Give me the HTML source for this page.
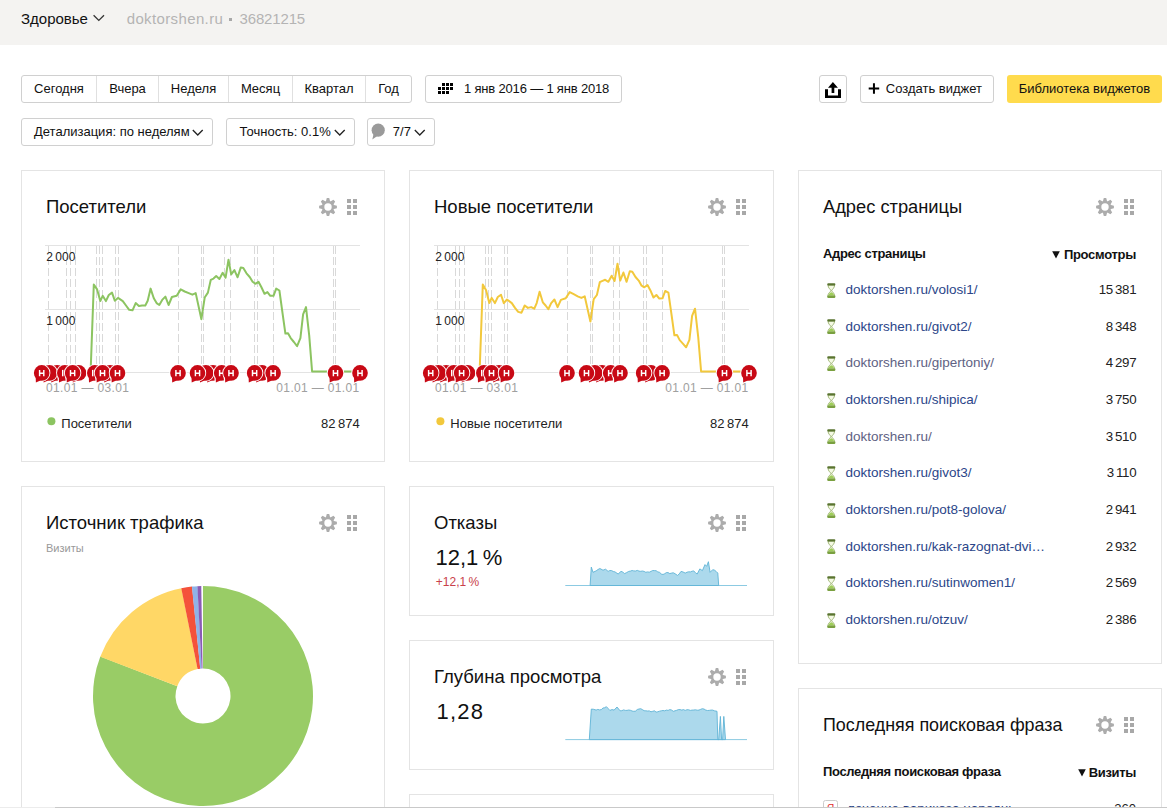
<!DOCTYPE html>
<html><head><meta charset="utf-8"><style>
html,body{margin:0;padding:0;width:1167px;height:808px;overflow:hidden;background:#fff;}
body{position:relative;font-family:"Liberation Sans", sans-serif;}
.t{position:absolute;white-space:nowrap;line-height:1;}
svg{overflow:visible;}
</style></head><body>
<div style="position:absolute;left:0px;top:0px;width:1167px;height:45px;box-sizing:border-box;background:#f4f3f1;"></div>
<div class="t" style="left:21.00px;top:11.30px;font-size:15px;color:#111;font-weight:400;">Здоровье</div>
<svg style="position:absolute;left:90px;top:10px;" width="18" height="14" viewBox="0 0 18 14"><polyline points="3.6,5.2 8.8,10.4 14,5.2" fill="none" stroke="#333" stroke-width="1.3"/></svg>
<div class="t" style="left:126.70px;top:10.80px;font-size:15px;color:#b4b4b4;font-weight:400;letter-spacing:0.37px;">doktorshen.ru</div>
<div style="position:absolute;left:229px;top:18px;width:3px;height:3px;box-sizing:border-box;background:#a8a8a8;"></div>
<div class="t" style="left:239.50px;top:10.80px;font-size:15px;color:#b4b4b4;font-weight:400;letter-spacing:-0.15px;">36821215</div>
<div style="position:absolute;left:21px;top:75px;width:391px;height:28px;box-sizing:border-box;border:1px solid #d0d0d0;border-radius:3px;background:#fff;"></div>
<div style="position:absolute;left:96px;top:76px;width:1px;height:26px;box-sizing:border-box;background:#e0e0e0;"></div>
<div style="position:absolute;left:158px;top:76px;width:1px;height:26px;box-sizing:border-box;background:#e0e0e0;"></div>
<div style="position:absolute;left:228px;top:76px;width:1px;height:26px;box-sizing:border-box;background:#e0e0e0;"></div>
<div style="position:absolute;left:292px;top:76px;width:1px;height:26px;box-sizing:border-box;background:#e0e0e0;"></div>
<div style="position:absolute;left:365px;top:76px;width:1px;height:26px;box-sizing:border-box;background:#e0e0e0;"></div>
<div class="t" style="left:59.00px;transform:translateX(-50%);top:82.00px;font-size:13px;color:#111;font-weight:400;">Сегодня</div>
<div class="t" style="left:127.50px;transform:translateX(-50%);top:82.00px;font-size:13px;color:#111;font-weight:400;">Вчера</div>
<div class="t" style="left:193.50px;transform:translateX(-50%);top:82.00px;font-size:13px;color:#111;font-weight:400;">Неделя</div>
<div class="t" style="left:260.50px;transform:translateX(-50%);top:82.00px;font-size:13px;color:#111;font-weight:400;">Месяц</div>
<div class="t" style="left:329.00px;transform:translateX(-50%);top:82.00px;font-size:13px;color:#111;font-weight:400;">Квартал</div>
<div class="t" style="left:388.50px;transform:translateX(-50%);top:82.00px;font-size:13px;color:#111;font-weight:400;">Год</div>
<div style="position:absolute;left:425px;top:75px;width:197px;height:28px;box-sizing:border-box;border:1px solid #d0d0d0;border-radius:3px;background:#fff;"></div>
<svg style="position:absolute;left:438px;top:83px;" width="17" height="13" viewBox="0 0 17 13"><rect x="4" y="0" width="3" height="3" fill="#000"/><rect x="8" y="0" width="3" height="3" fill="#000"/><rect x="12" y="0" width="3" height="3" fill="#000"/><rect x="0" y="4" width="3" height="3" fill="#000"/><rect x="4" y="4" width="3" height="3" fill="#000"/><rect x="8" y="4" width="3" height="3" fill="#000"/><rect x="12" y="4" width="3" height="3" fill="#000"/><rect x="0" y="8" width="3" height="3" fill="#000"/><rect x="4" y="8" width="3" height="3" fill="#000"/><rect x="8" y="8" width="3" height="3" fill="#000"/></svg>
<div class="t" style="left:464.00px;top:82.00px;font-size:13px;color:#111;font-weight:400;letter-spacing:-0.18px;">1 янв 2016 — 1 янв 2018</div>
<div style="position:absolute;left:819px;top:75px;width:28px;height:28px;box-sizing:border-box;border:1px solid #d0d0d0;border-radius:3px;background:#fff;"></div>
<svg style="position:absolute;left:819px;top:75px;" width="28" height="28" viewBox="0 0 28 28"><path d="M6,14.3 h3 v6.3 h10 v-6.3 h3 v8.6 h-16 z" fill="#000"/><path d="M13.9,7 L18.9,12.8 L15.3,12.8 L15.3,18 L12.6,18 L12.6,12.8 L9,12.8 z" fill="#000"/></svg>
<div style="position:absolute;left:860px;top:75px;width:134px;height:28px;box-sizing:border-box;border:1px solid #d0d0d0;border-radius:3px;background:#fff;"></div>
<svg style="position:absolute;left:868px;top:82px;" width="12" height="13" viewBox="0 0 12 13"><rect x="0.7" y="5.5" width="10.5" height="2" fill="#000"/><rect x="4.95" y="1.25" width="2" height="10.5" fill="#000"/></svg>
<div class="t" style="left:885.80px;top:82.00px;font-size:13px;color:#111;font-weight:400;">Создать виджет</div>
<div style="position:absolute;left:1007px;top:75px;width:155px;height:28px;box-sizing:border-box;background:#ffdb4d;border-radius:3px;"></div>
<div class="t" style="left:1084.50px;transform:translateX(-50%);top:82.00px;font-size:13px;color:#111;font-weight:400;">Библиотека виджетов</div>
<div style="position:absolute;left:21px;top:118px;width:192px;height:28px;box-sizing:border-box;border:1px solid #d0d0d0;border-radius:3px;background:#fff;"></div>
<div class="t" style="left:34.00px;top:125.30px;font-size:13px;color:#111;font-weight:400;">Детализация: по неделям</div>
<svg style="position:absolute;left:191.5px;top:128.8px;" width="12" height="8" viewBox="0 0 12 8"><polyline points="0.8,1 5.75,6 10.7,1" fill="none" stroke="#222" stroke-width="1.3"/></svg>
<div style="position:absolute;left:226px;top:118px;width:129px;height:28px;box-sizing:border-box;border:1px solid #d0d0d0;border-radius:3px;background:#fff;"></div>
<div class="t" style="left:239.60px;top:125.30px;font-size:13px;color:#111;font-weight:400;">Точность: 0.1%</div>
<svg style="position:absolute;left:333.5px;top:128.8px;" width="12" height="8" viewBox="0 0 12 8"><polyline points="0.8,1 5.75,6 10.7,1" fill="none" stroke="#222" stroke-width="1.3"/></svg>
<div style="position:absolute;left:367px;top:118px;width:68px;height:28px;box-sizing:border-box;border:1px solid #d0d0d0;border-radius:3px;background:#fff;"></div>
<svg style="position:absolute;left:370px;top:122px;" width="16" height="19" viewBox="0 0 16 19"><circle cx="8.2" cy="8.2" r="6.6" fill="#9a9a9a"/><path d="M3.5,12 L2.3,17.6 L8,13.5 z" fill="#9a9a9a"/></svg>
<div class="t" style="left:392.80px;top:125.30px;font-size:13px;color:#111;font-weight:400;">7/7</div>
<svg style="position:absolute;left:413.5px;top:128.8px;" width="12" height="8" viewBox="0 0 12 8"><polyline points="0.8,1 5.75,6 10.7,1" fill="none" stroke="#222" stroke-width="1.3"/></svg>
<div style="position:absolute;left:21px;top:170px;width:364px;height:292px;box-sizing:border-box;border:1px solid #e4e4e4;background:#fff;"></div>
<div class="t" style="left:46.00px;top:197.64px;font-size:18.5px;color:#111;font-weight:400;">Посетители</div>
<svg style="position:absolute;left:301px;top:190px;" width="60" height="36" viewBox="0 0 60 36"><g transform="translate(27,17)"><path d="M-2.3,-5 L-1.2,-8.9 L1.2,-8.9 L2.3,-5 z" transform="rotate(0)" fill="#acacac"/><path d="M-2.3,-5 L-1.2,-8.9 L1.2,-8.9 L2.3,-5 z" transform="rotate(45)" fill="#acacac"/><path d="M-2.3,-5 L-1.2,-8.9 L1.2,-8.9 L2.3,-5 z" transform="rotate(90)" fill="#acacac"/><path d="M-2.3,-5 L-1.2,-8.9 L1.2,-8.9 L2.3,-5 z" transform="rotate(135)" fill="#acacac"/><path d="M-2.3,-5 L-1.2,-8.9 L1.2,-8.9 L2.3,-5 z" transform="rotate(180)" fill="#acacac"/><path d="M-2.3,-5 L-1.2,-8.9 L1.2,-8.9 L2.3,-5 z" transform="rotate(225)" fill="#acacac"/><path d="M-2.3,-5 L-1.2,-8.9 L1.2,-8.9 L2.3,-5 z" transform="rotate(270)" fill="#acacac"/><path d="M-2.3,-5 L-1.2,-8.9 L1.2,-8.9 L2.3,-5 z" transform="rotate(315)" fill="#acacac"/><circle cx="0" cy="0" r="6.1" fill="#acacac"/><circle cx="0" cy="0" r="3.7" fill="#fff"/></g><rect x="46" y="9" width="4" height="4" fill="#a8a8a8"/><rect x="46" y="15" width="4" height="4" fill="#a8a8a8"/><rect x="46" y="21" width="4" height="4" fill="#a8a8a8"/><rect x="52" y="9" width="4" height="4" fill="#a8a8a8"/><rect x="52" y="15" width="4" height="4" fill="#a8a8a8"/><rect x="52" y="21" width="4" height="4" fill="#a8a8a8"/></svg>
<div style="position:absolute;left:409px;top:170px;width:365px;height:292px;box-sizing:border-box;border:1px solid #e4e4e4;background:#fff;"></div>
<div class="t" style="left:434.00px;top:197.64px;font-size:18.5px;color:#111;font-weight:400;">Новые посетители</div>
<svg style="position:absolute;left:690px;top:190px;" width="60" height="36" viewBox="0 0 60 36"><g transform="translate(27,17)"><path d="M-2.3,-5 L-1.2,-8.9 L1.2,-8.9 L2.3,-5 z" transform="rotate(0)" fill="#acacac"/><path d="M-2.3,-5 L-1.2,-8.9 L1.2,-8.9 L2.3,-5 z" transform="rotate(45)" fill="#acacac"/><path d="M-2.3,-5 L-1.2,-8.9 L1.2,-8.9 L2.3,-5 z" transform="rotate(90)" fill="#acacac"/><path d="M-2.3,-5 L-1.2,-8.9 L1.2,-8.9 L2.3,-5 z" transform="rotate(135)" fill="#acacac"/><path d="M-2.3,-5 L-1.2,-8.9 L1.2,-8.9 L2.3,-5 z" transform="rotate(180)" fill="#acacac"/><path d="M-2.3,-5 L-1.2,-8.9 L1.2,-8.9 L2.3,-5 z" transform="rotate(225)" fill="#acacac"/><path d="M-2.3,-5 L-1.2,-8.9 L1.2,-8.9 L2.3,-5 z" transform="rotate(270)" fill="#acacac"/><path d="M-2.3,-5 L-1.2,-8.9 L1.2,-8.9 L2.3,-5 z" transform="rotate(315)" fill="#acacac"/><circle cx="0" cy="0" r="6.1" fill="#acacac"/><circle cx="0" cy="0" r="3.7" fill="#fff"/></g><rect x="46" y="9" width="4" height="4" fill="#a8a8a8"/><rect x="46" y="15" width="4" height="4" fill="#a8a8a8"/><rect x="46" y="21" width="4" height="4" fill="#a8a8a8"/><rect x="52" y="9" width="4" height="4" fill="#a8a8a8"/><rect x="52" y="15" width="4" height="4" fill="#a8a8a8"/><rect x="52" y="21" width="4" height="4" fill="#a8a8a8"/></svg>
<div style="position:absolute;left:798px;top:170px;width:364px;height:494px;box-sizing:border-box;border:1px solid #e4e4e4;background:#fff;"></div>
<div class="t" style="left:823.00px;top:197.81px;font-size:18.3px;color:#111;font-weight:400;">Адрес страницы</div>
<svg style="position:absolute;left:1078px;top:190px;" width="60" height="36" viewBox="0 0 60 36"><g transform="translate(27,17)"><path d="M-2.3,-5 L-1.2,-8.9 L1.2,-8.9 L2.3,-5 z" transform="rotate(0)" fill="#acacac"/><path d="M-2.3,-5 L-1.2,-8.9 L1.2,-8.9 L2.3,-5 z" transform="rotate(45)" fill="#acacac"/><path d="M-2.3,-5 L-1.2,-8.9 L1.2,-8.9 L2.3,-5 z" transform="rotate(90)" fill="#acacac"/><path d="M-2.3,-5 L-1.2,-8.9 L1.2,-8.9 L2.3,-5 z" transform="rotate(135)" fill="#acacac"/><path d="M-2.3,-5 L-1.2,-8.9 L1.2,-8.9 L2.3,-5 z" transform="rotate(180)" fill="#acacac"/><path d="M-2.3,-5 L-1.2,-8.9 L1.2,-8.9 L2.3,-5 z" transform="rotate(225)" fill="#acacac"/><path d="M-2.3,-5 L-1.2,-8.9 L1.2,-8.9 L2.3,-5 z" transform="rotate(270)" fill="#acacac"/><path d="M-2.3,-5 L-1.2,-8.9 L1.2,-8.9 L2.3,-5 z" transform="rotate(315)" fill="#acacac"/><circle cx="0" cy="0" r="6.1" fill="#acacac"/><circle cx="0" cy="0" r="3.7" fill="#fff"/></g><rect x="46" y="9" width="4" height="4" fill="#a8a8a8"/><rect x="46" y="15" width="4" height="4" fill="#a8a8a8"/><rect x="46" y="21" width="4" height="4" fill="#a8a8a8"/><rect x="52" y="9" width="4" height="4" fill="#a8a8a8"/><rect x="52" y="15" width="4" height="4" fill="#a8a8a8"/><rect x="52" y="21" width="4" height="4" fill="#a8a8a8"/></svg>
<div style="position:absolute;left:21px;top:486px;width:364px;height:340px;box-sizing:border-box;border:1px solid #e4e4e4;background:#fff;"></div>
<div class="t" style="left:46.00px;top:513.64px;font-size:18.5px;color:#111;font-weight:400;">Источник трафика</div>
<svg style="position:absolute;left:301px;top:506px;" width="60" height="36" viewBox="0 0 60 36"><g transform="translate(27,17)"><path d="M-2.3,-5 L-1.2,-8.9 L1.2,-8.9 L2.3,-5 z" transform="rotate(0)" fill="#acacac"/><path d="M-2.3,-5 L-1.2,-8.9 L1.2,-8.9 L2.3,-5 z" transform="rotate(45)" fill="#acacac"/><path d="M-2.3,-5 L-1.2,-8.9 L1.2,-8.9 L2.3,-5 z" transform="rotate(90)" fill="#acacac"/><path d="M-2.3,-5 L-1.2,-8.9 L1.2,-8.9 L2.3,-5 z" transform="rotate(135)" fill="#acacac"/><path d="M-2.3,-5 L-1.2,-8.9 L1.2,-8.9 L2.3,-5 z" transform="rotate(180)" fill="#acacac"/><path d="M-2.3,-5 L-1.2,-8.9 L1.2,-8.9 L2.3,-5 z" transform="rotate(225)" fill="#acacac"/><path d="M-2.3,-5 L-1.2,-8.9 L1.2,-8.9 L2.3,-5 z" transform="rotate(270)" fill="#acacac"/><path d="M-2.3,-5 L-1.2,-8.9 L1.2,-8.9 L2.3,-5 z" transform="rotate(315)" fill="#acacac"/><circle cx="0" cy="0" r="6.1" fill="#acacac"/><circle cx="0" cy="0" r="3.7" fill="#fff"/></g><rect x="46" y="9" width="4" height="4" fill="#a8a8a8"/><rect x="46" y="15" width="4" height="4" fill="#a8a8a8"/><rect x="46" y="21" width="4" height="4" fill="#a8a8a8"/><rect x="52" y="9" width="4" height="4" fill="#a8a8a8"/><rect x="52" y="15" width="4" height="4" fill="#a8a8a8"/><rect x="52" y="21" width="4" height="4" fill="#a8a8a8"/></svg>
<div style="position:absolute;left:409px;top:486px;width:365px;height:130px;box-sizing:border-box;border:1px solid #e4e4e4;background:#fff;"></div>
<div class="t" style="left:434.00px;top:513.64px;font-size:18.5px;color:#111;font-weight:400;">Отказы</div>
<svg style="position:absolute;left:690px;top:506px;" width="60" height="36" viewBox="0 0 60 36"><g transform="translate(27,17)"><path d="M-2.3,-5 L-1.2,-8.9 L1.2,-8.9 L2.3,-5 z" transform="rotate(0)" fill="#acacac"/><path d="M-2.3,-5 L-1.2,-8.9 L1.2,-8.9 L2.3,-5 z" transform="rotate(45)" fill="#acacac"/><path d="M-2.3,-5 L-1.2,-8.9 L1.2,-8.9 L2.3,-5 z" transform="rotate(90)" fill="#acacac"/><path d="M-2.3,-5 L-1.2,-8.9 L1.2,-8.9 L2.3,-5 z" transform="rotate(135)" fill="#acacac"/><path d="M-2.3,-5 L-1.2,-8.9 L1.2,-8.9 L2.3,-5 z" transform="rotate(180)" fill="#acacac"/><path d="M-2.3,-5 L-1.2,-8.9 L1.2,-8.9 L2.3,-5 z" transform="rotate(225)" fill="#acacac"/><path d="M-2.3,-5 L-1.2,-8.9 L1.2,-8.9 L2.3,-5 z" transform="rotate(270)" fill="#acacac"/><path d="M-2.3,-5 L-1.2,-8.9 L1.2,-8.9 L2.3,-5 z" transform="rotate(315)" fill="#acacac"/><circle cx="0" cy="0" r="6.1" fill="#acacac"/><circle cx="0" cy="0" r="3.7" fill="#fff"/></g><rect x="46" y="9" width="4" height="4" fill="#a8a8a8"/><rect x="46" y="15" width="4" height="4" fill="#a8a8a8"/><rect x="46" y="21" width="4" height="4" fill="#a8a8a8"/><rect x="52" y="9" width="4" height="4" fill="#a8a8a8"/><rect x="52" y="15" width="4" height="4" fill="#a8a8a8"/><rect x="52" y="21" width="4" height="4" fill="#a8a8a8"/></svg>
<div style="position:absolute;left:409px;top:640px;width:365px;height:130px;box-sizing:border-box;border:1px solid #e4e4e4;background:#fff;"></div>
<div class="t" style="left:434.00px;top:667.64px;font-size:18.5px;color:#111;font-weight:400;">Глубина просмотра</div>
<svg style="position:absolute;left:690px;top:660px;" width="60" height="36" viewBox="0 0 60 36"><g transform="translate(27,17)"><path d="M-2.3,-5 L-1.2,-8.9 L1.2,-8.9 L2.3,-5 z" transform="rotate(0)" fill="#acacac"/><path d="M-2.3,-5 L-1.2,-8.9 L1.2,-8.9 L2.3,-5 z" transform="rotate(45)" fill="#acacac"/><path d="M-2.3,-5 L-1.2,-8.9 L1.2,-8.9 L2.3,-5 z" transform="rotate(90)" fill="#acacac"/><path d="M-2.3,-5 L-1.2,-8.9 L1.2,-8.9 L2.3,-5 z" transform="rotate(135)" fill="#acacac"/><path d="M-2.3,-5 L-1.2,-8.9 L1.2,-8.9 L2.3,-5 z" transform="rotate(180)" fill="#acacac"/><path d="M-2.3,-5 L-1.2,-8.9 L1.2,-8.9 L2.3,-5 z" transform="rotate(225)" fill="#acacac"/><path d="M-2.3,-5 L-1.2,-8.9 L1.2,-8.9 L2.3,-5 z" transform="rotate(270)" fill="#acacac"/><path d="M-2.3,-5 L-1.2,-8.9 L1.2,-8.9 L2.3,-5 z" transform="rotate(315)" fill="#acacac"/><circle cx="0" cy="0" r="6.1" fill="#acacac"/><circle cx="0" cy="0" r="3.7" fill="#fff"/></g><rect x="46" y="9" width="4" height="4" fill="#a8a8a8"/><rect x="46" y="15" width="4" height="4" fill="#a8a8a8"/><rect x="46" y="21" width="4" height="4" fill="#a8a8a8"/><rect x="52" y="9" width="4" height="4" fill="#a8a8a8"/><rect x="52" y="15" width="4" height="4" fill="#a8a8a8"/><rect x="52" y="21" width="4" height="4" fill="#a8a8a8"/></svg>
<div style="position:absolute;left:409px;top:794px;width:365px;height:40px;box-sizing:border-box;border:1px solid #e4e4e4;background:#fff;"></div>
<svg style="position:absolute;left:689px;top:814px;" width="60" height="36" viewBox="0 0 60 36"><g transform="translate(27,17)"><path d="M-2.3,-5 L-1.2,-8.9 L1.2,-8.9 L2.3,-5 z" transform="rotate(0)" fill="#acacac"/><path d="M-2.3,-5 L-1.2,-8.9 L1.2,-8.9 L2.3,-5 z" transform="rotate(45)" fill="#acacac"/><path d="M-2.3,-5 L-1.2,-8.9 L1.2,-8.9 L2.3,-5 z" transform="rotate(90)" fill="#acacac"/><path d="M-2.3,-5 L-1.2,-8.9 L1.2,-8.9 L2.3,-5 z" transform="rotate(135)" fill="#acacac"/><path d="M-2.3,-5 L-1.2,-8.9 L1.2,-8.9 L2.3,-5 z" transform="rotate(180)" fill="#acacac"/><path d="M-2.3,-5 L-1.2,-8.9 L1.2,-8.9 L2.3,-5 z" transform="rotate(225)" fill="#acacac"/><path d="M-2.3,-5 L-1.2,-8.9 L1.2,-8.9 L2.3,-5 z" transform="rotate(270)" fill="#acacac"/><path d="M-2.3,-5 L-1.2,-8.9 L1.2,-8.9 L2.3,-5 z" transform="rotate(315)" fill="#acacac"/><circle cx="0" cy="0" r="6.1" fill="#acacac"/><circle cx="0" cy="0" r="3.7" fill="#fff"/></g><rect x="46" y="9" width="4" height="4" fill="#a8a8a8"/><rect x="46" y="15" width="4" height="4" fill="#a8a8a8"/><rect x="46" y="21" width="4" height="4" fill="#a8a8a8"/><rect x="52" y="9" width="4" height="4" fill="#a8a8a8"/><rect x="52" y="15" width="4" height="4" fill="#a8a8a8"/><rect x="52" y="21" width="4" height="4" fill="#a8a8a8"/></svg>
<div style="position:absolute;left:798px;top:688px;width:364px;height:200px;box-sizing:border-box;border:1px solid #e4e4e4;background:#fff;"></div>
<div class="t" style="left:823.00px;top:716.85px;font-size:17.9px;color:#111;font-weight:400;">Последняя поисковая фраза</div>
<svg style="position:absolute;left:1078px;top:708px;" width="60" height="36" viewBox="0 0 60 36"><g transform="translate(27,17)"><path d="M-2.3,-5 L-1.2,-8.9 L1.2,-8.9 L2.3,-5 z" transform="rotate(0)" fill="#acacac"/><path d="M-2.3,-5 L-1.2,-8.9 L1.2,-8.9 L2.3,-5 z" transform="rotate(45)" fill="#acacac"/><path d="M-2.3,-5 L-1.2,-8.9 L1.2,-8.9 L2.3,-5 z" transform="rotate(90)" fill="#acacac"/><path d="M-2.3,-5 L-1.2,-8.9 L1.2,-8.9 L2.3,-5 z" transform="rotate(135)" fill="#acacac"/><path d="M-2.3,-5 L-1.2,-8.9 L1.2,-8.9 L2.3,-5 z" transform="rotate(180)" fill="#acacac"/><path d="M-2.3,-5 L-1.2,-8.9 L1.2,-8.9 L2.3,-5 z" transform="rotate(225)" fill="#acacac"/><path d="M-2.3,-5 L-1.2,-8.9 L1.2,-8.9 L2.3,-5 z" transform="rotate(270)" fill="#acacac"/><path d="M-2.3,-5 L-1.2,-8.9 L1.2,-8.9 L2.3,-5 z" transform="rotate(315)" fill="#acacac"/><circle cx="0" cy="0" r="6.1" fill="#acacac"/><circle cx="0" cy="0" r="3.7" fill="#fff"/></g><rect x="46" y="9" width="4" height="4" fill="#a8a8a8"/><rect x="46" y="15" width="4" height="4" fill="#a8a8a8"/><rect x="46" y="21" width="4" height="4" fill="#a8a8a8"/><rect x="52" y="9" width="4" height="4" fill="#a8a8a8"/><rect x="52" y="15" width="4" height="4" fill="#a8a8a8"/><rect x="52" y="21" width="4" height="4" fill="#a8a8a8"/></svg>
<svg style="position:absolute;left:30px;top:236px;" width="340" height="164" viewBox="0 0 340 164"><line x1="15" y1="9.5" x2="330" y2="9.5" stroke="#e3e3e3" stroke-width="1"/><line x1="15" y1="73.5" x2="330" y2="73.5" stroke="#e3e3e3" stroke-width="1"/><line x1="15" y1="136.5" x2="330" y2="136.5" stroke="#e3e3e3" stroke-width="1"/><line x1="18.5" y1="10" x2="18.5" y2="136" stroke="#d9d9d9" stroke-width="1" stroke-dasharray="8,3"/><line x1="36.5" y1="10" x2="36.5" y2="136" stroke="#d9d9d9" stroke-width="1" stroke-dasharray="8,3"/><line x1="40.5" y1="10" x2="40.5" y2="136" stroke="#d9d9d9" stroke-width="1" stroke-dasharray="8,3"/><line x1="45.5" y1="10" x2="45.5" y2="136" stroke="#d9d9d9" stroke-width="1" stroke-dasharray="8,3"/><line x1="66.5" y1="10" x2="66.5" y2="136" stroke="#d9d9d9" stroke-width="1" stroke-dasharray="8,3"/><line x1="69.5" y1="10" x2="69.5" y2="136" stroke="#d9d9d9" stroke-width="1" stroke-dasharray="8,3"/><line x1="72.5" y1="10" x2="72.5" y2="136" stroke="#d9d9d9" stroke-width="1" stroke-dasharray="8,3"/><line x1="85.5" y1="10" x2="85.5" y2="136" stroke="#d9d9d9" stroke-width="1" stroke-dasharray="8,3"/><line x1="88.5" y1="10" x2="88.5" y2="136" stroke="#d9d9d9" stroke-width="1" stroke-dasharray="8,3"/><line x1="148.5" y1="10" x2="148.5" y2="136" stroke="#d9d9d9" stroke-width="1" stroke-dasharray="8,3"/><line x1="171.5" y1="10" x2="171.5" y2="136" stroke="#d9d9d9" stroke-width="1" stroke-dasharray="8,3"/><line x1="173.5" y1="10" x2="173.5" y2="136" stroke="#d9d9d9" stroke-width="1" stroke-dasharray="8,3"/><line x1="194.5" y1="10" x2="194.5" y2="136" stroke="#d9d9d9" stroke-width="1" stroke-dasharray="8,3"/><line x1="200.5" y1="10" x2="200.5" y2="136" stroke="#d9d9d9" stroke-width="1" stroke-dasharray="8,3"/><line x1="224.5" y1="10" x2="224.5" y2="136" stroke="#d9d9d9" stroke-width="1" stroke-dasharray="8,3"/><line x1="227.5" y1="10" x2="227.5" y2="136" stroke="#d9d9d9" stroke-width="1" stroke-dasharray="8,3"/><line x1="243.5" y1="10" x2="243.5" y2="136" stroke="#d9d9d9" stroke-width="1" stroke-dasharray="8,3"/><line x1="303.5" y1="10" x2="303.5" y2="136" stroke="#d9d9d9" stroke-width="1" stroke-dasharray="8,3"/><line x1="305.5" y1="10" x2="305.5" y2="136" stroke="#d9d9d9" stroke-width="1" stroke-dasharray="8,3"/><polyline points="15.0,136.0 60.6,136.2 63.8,48.6 67.1,53.4 70.3,65.1 72.7,59.8 75.9,65.1 78.8,59.0 82.0,56.6 84.8,64.7 88.0,61.9 92.8,65.1 96.0,69.5 99.2,73.8 102.5,74.3 105.7,67.1 108.9,70.0 112.1,69.5 115.3,69.5 117.7,64.7 120.6,52.6 123.8,62.3 126.6,67.1 129.3,69.0 132.2,63.9 135.4,60.6 138.6,69.0 141.9,61.0 146.7,59.8 150.7,53.4 154.7,55.5 158.7,57.1 162.4,58.7 165.7,57.1 171.4,83.2 174.7,61.5 177.9,56.6 180.8,43.8 183.5,42.6 186.2,40.1 189.4,43.0 192.7,36.8 195.6,41.7 198.5,23.7 201.2,38.4 204.4,34.1 207.6,41.3 210.8,31.4 213.3,32.0 216.5,37.3 219.7,41.0 222.6,45.8 225.3,47.8 228.5,45.8 231.3,51.0 234.5,57.8 237.4,56.1 240.3,59.8 243.5,59.8 246.2,52.6 249.4,54.5 252.7,78.3 255.4,97.6 258.0,97.3 260.7,102.1 263.9,106.0 267.1,110.2 270.4,102.1 273.1,78.3 276.0,71.1 279.2,99.3 282.1,135.5 330.0,135.5" fill="none" stroke="#8cc461" stroke-width="2" stroke-linejoin="round"/><g transform="translate(27.1,136.9)"><circle r="8.7" fill="#fff"/><path d="M-6.8,3.8 L-5.9,10.2 L0.8,6.8 z" fill="#fff" stroke="#fff" stroke-width="1.4"/><circle r="7.8" fill="#c80915"/><path d="M-6,3.8 L-5.8,9.6 L0.4,6.9 z" fill="#c80915"/></g><g transform="translate(19.4,136.9)"><circle r="8.7" fill="#fff"/><path d="M-6.8,3.8 L-5.9,10.2 L0.8,6.8 z" fill="#fff" stroke="#fff" stroke-width="1.4"/><circle r="7.8" fill="#c80915"/><path d="M-6,3.8 L-5.8,9.6 L0.4,6.9 z" fill="#c80915"/></g><g transform="translate(11.7,136.9)"><circle r="8.7" fill="#fff"/><path d="M-6.8,3.8 L-5.9,10.2 L0.8,6.8 z" fill="#fff" stroke="#fff" stroke-width="1.4"/><circle r="7.8" fill="#c80915"/><path d="M-6,3.8 L-5.8,9.6 L0.4,6.9 z" fill="#c80915"/><path d="M-2.1,-3 v6.4 M2.1,-3 v6.4 M-2.1,0.3 h4.2" stroke="#fff" stroke-width="1.45" fill="none"/></g><g transform="translate(48.6,136.9)"><circle r="8.7" fill="#fff"/><path d="M-6.8,3.8 L-5.9,10.2 L0.8,6.8 z" fill="#fff" stroke="#fff" stroke-width="1.4"/><circle r="7.8" fill="#c80915"/><path d="M-6,3.8 L-5.8,9.6 L0.4,6.9 z" fill="#c80915"/></g><g transform="translate(34.8,136.9)"><circle r="8.7" fill="#fff"/><path d="M-6.8,3.8 L-5.9,10.2 L0.8,6.8 z" fill="#fff" stroke="#fff" stroke-width="1.4"/><circle r="7.8" fill="#c80915"/><path d="M-6,3.8 L-5.8,9.6 L0.4,6.9 z" fill="#c80915"/><path d="M-2.1,-3 v6.4" stroke="#fff" stroke-width="1.45" fill="none"/></g><g transform="translate(42.6,136.9)"><circle r="8.7" fill="#fff"/><path d="M-6.8,3.8 L-5.9,10.2 L0.8,6.8 z" fill="#fff" stroke="#fff" stroke-width="1.4"/><circle r="7.8" fill="#c80915"/><path d="M-6,3.8 L-5.8,9.6 L0.4,6.9 z" fill="#c80915"/><path d="M-2.1,-3 v6.4 M2.1,-3 v6.4 M-2.1,0.3 h4.2" stroke="#fff" stroke-width="1.45" fill="none"/></g><g transform="translate(80.0,136.9)"><circle r="8.7" fill="#fff"/><path d="M-6.8,3.8 L-5.9,10.2 L0.8,6.8 z" fill="#fff" stroke="#fff" stroke-width="1.4"/><circle r="7.8" fill="#c80915"/><path d="M-6,3.8 L-5.8,9.6 L0.4,6.9 z" fill="#c80915"/></g><g transform="translate(64.8,136.9)"><circle r="8.7" fill="#fff"/><path d="M-6.8,3.8 L-5.9,10.2 L0.8,6.8 z" fill="#fff" stroke="#fff" stroke-width="1.4"/><circle r="7.8" fill="#c80915"/><path d="M-6,3.8 L-5.8,9.6 L0.4,6.9 z" fill="#c80915"/><path d="M-2.1,-3 v6.4" stroke="#fff" stroke-width="1.45" fill="none"/></g><g transform="translate(72.5,136.9)"><circle r="8.7" fill="#fff"/><path d="M-6.8,3.8 L-5.9,10.2 L0.8,6.8 z" fill="#fff" stroke="#fff" stroke-width="1.4"/><circle r="7.8" fill="#c80915"/><path d="M-6,3.8 L-5.8,9.6 L0.4,6.9 z" fill="#c80915"/><path d="M-2.1,-3 v6.4 M2.1,-3 v6.4 M-2.1,0.3 h4.2" stroke="#fff" stroke-width="1.45" fill="none"/></g><g transform="translate(87.5,136.9)"><circle r="8.7" fill="#fff"/><path d="M-6.8,3.8 L-5.9,10.2 L0.8,6.8 z" fill="#fff" stroke="#fff" stroke-width="1.4"/><circle r="7.8" fill="#c80915"/><path d="M-6,3.8 L-5.8,9.6 L0.4,6.9 z" fill="#c80915"/><path d="M-2.1,-3 v6.4 M2.1,-3 v6.4 M-2.1,0.3 h4.2" stroke="#fff" stroke-width="1.45" fill="none"/></g><g transform="translate(148.0,136.9)"><circle r="8.7" fill="#fff"/><path d="M-6.8,3.8 L-5.9,10.2 L0.8,6.8 z" fill="#fff" stroke="#fff" stroke-width="1.4"/><circle r="7.8" fill="#c80915"/><path d="M-6,3.8 L-5.8,9.6 L0.4,6.9 z" fill="#c80915"/><path d="M-2.1,-3 v6.4 M2.1,-3 v6.4 M-2.1,0.3 h4.2" stroke="#fff" stroke-width="1.45" fill="none"/></g><g transform="translate(183.0,136.9)"><circle r="8.7" fill="#fff"/><path d="M-6.8,3.8 L-5.9,10.2 L0.8,6.8 z" fill="#fff" stroke="#fff" stroke-width="1.4"/><circle r="7.8" fill="#c80915"/><path d="M-6,3.8 L-5.8,9.6 L0.4,6.9 z" fill="#c80915"/></g><g transform="translate(175.8,136.9)"><circle r="8.7" fill="#fff"/><path d="M-6.8,3.8 L-5.9,10.2 L0.8,6.8 z" fill="#fff" stroke="#fff" stroke-width="1.4"/><circle r="7.8" fill="#c80915"/><path d="M-6,3.8 L-5.8,9.6 L0.4,6.9 z" fill="#c80915"/></g><g transform="translate(167.5,136.9)"><circle r="8.7" fill="#fff"/><path d="M-6.8,3.8 L-5.9,10.2 L0.8,6.8 z" fill="#fff" stroke="#fff" stroke-width="1.4"/><circle r="7.8" fill="#c80915"/><path d="M-6,3.8 L-5.8,9.6 L0.4,6.9 z" fill="#c80915"/><path d="M-2.1,-3 v6.4 M2.1,-3 v6.4 M-2.1,0.3 h4.2" stroke="#fff" stroke-width="1.45" fill="none"/></g><g transform="translate(191.7,136.9)"><circle r="8.7" fill="#fff"/><path d="M-6.8,3.8 L-5.9,10.2 L0.8,6.8 z" fill="#fff" stroke="#fff" stroke-width="1.4"/><circle r="7.8" fill="#c80915"/><path d="M-6,3.8 L-5.8,9.6 L0.4,6.9 z" fill="#c80915"/><path d="M-2.1,-3 v6.4 M2.1,-3 v6.4 M-2.1,0.3 h4.2" stroke="#fff" stroke-width="1.45" fill="none"/></g><g transform="translate(201.0,136.9)"><circle r="8.7" fill="#fff"/><path d="M-6.8,3.8 L-5.9,10.2 L0.8,6.8 z" fill="#fff" stroke="#fff" stroke-width="1.4"/><circle r="7.8" fill="#c80915"/><path d="M-6,3.8 L-5.8,9.6 L0.4,6.9 z" fill="#c80915"/><path d="M-2.1,-3 v6.4 M2.1,-3 v6.4 M-2.1,0.3 h4.2" stroke="#fff" stroke-width="1.45" fill="none"/></g><g transform="translate(232.0,136.9)"><circle r="8.7" fill="#fff"/><path d="M-6.8,3.8 L-5.9,10.2 L0.8,6.8 z" fill="#fff" stroke="#fff" stroke-width="1.4"/><circle r="7.8" fill="#c80915"/><path d="M-6,3.8 L-5.8,9.6 L0.4,6.9 z" fill="#c80915"/></g><g transform="translate(224.6,136.9)"><circle r="8.7" fill="#fff"/><path d="M-6.8,3.8 L-5.9,10.2 L0.8,6.8 z" fill="#fff" stroke="#fff" stroke-width="1.4"/><circle r="7.8" fill="#c80915"/><path d="M-6,3.8 L-5.8,9.6 L0.4,6.9 z" fill="#c80915"/><path d="M-2.1,-3 v6.4 M2.1,-3 v6.4 M-2.1,0.3 h4.2" stroke="#fff" stroke-width="1.45" fill="none"/></g><g transform="translate(243.1,136.9)"><circle r="8.7" fill="#fff"/><path d="M-6.8,3.8 L-5.9,10.2 L0.8,6.8 z" fill="#fff" stroke="#fff" stroke-width="1.4"/><circle r="7.8" fill="#c80915"/><path d="M-6,3.8 L-5.8,9.6 L0.4,6.9 z" fill="#c80915"/><path d="M-2.1,-3 v6.4 M2.1,-3 v6.4 M-2.1,0.3 h4.2" stroke="#fff" stroke-width="1.45" fill="none"/></g><g transform="translate(305.5,136.9)"><circle r="8.7" fill="#fff"/><path d="M-6.8,3.8 L-5.9,10.2 L0.8,6.8 z" fill="#fff" stroke="#fff" stroke-width="1.4"/><circle r="7.8" fill="#c80915"/><path d="M-6,3.8 L-5.8,9.6 L0.4,6.9 z" fill="#c80915"/><path d="M-2.1,-3 v6.4 M2.1,-3 v6.4 M-2.1,0.3 h4.2" stroke="#fff" stroke-width="1.45" fill="none"/></g><g transform="translate(330.0,136.9)"><circle r="8.7" fill="#fff"/><path d="M-6.8,3.8 L-5.9,10.2 L0.8,6.8 z" fill="#fff" stroke="#fff" stroke-width="1.4"/><circle r="7.8" fill="#c80915"/><path d="M-6,3.8 L-5.8,9.6 L0.4,6.9 z" fill="#c80915"/><path d="M-2.1,-3 v6.4 M2.1,-3 v6.4 M-2.1,0.3 h4.2" stroke="#fff" stroke-width="1.45" fill="none"/></g></svg>
<div class="t" style="left:46.30px;top:250.84px;font-size:12px;color:#222;font-weight:400;">2&thinsp;000</div>
<div class="t" style="left:46.30px;top:314.84px;font-size:12px;color:#222;font-weight:400;">1&thinsp;000</div>
<div class="t" style="left:46.00px;top:381.84px;font-size:12px;color:#a0a0a0;font-weight:400;letter-spacing:0.35px;">01.01 — 03.01</div>
<div class="t" style="right:807.40px;top:381.84px;font-size:12px;color:#a0a0a0;font-weight:400;letter-spacing:0.35px;">01.01 — 01.01</div>
<svg style="position:absolute;left:46.7px;top:416.8px;" width="9" height="9" viewBox="0 0 9 9"><circle cx="4.4" cy="4.2" r="4" fill="#8cc461"/></svg>
<div class="t" style="left:61.30px;top:417.30px;font-size:13px;color:#222;font-weight:400;">Посетители</div>
<div class="t" style="right:807.20px;top:417.30px;font-size:13px;color:#222;font-weight:400;">82&thinsp;874</div>
<svg style="position:absolute;left:419px;top:236px;" width="340" height="164" viewBox="0 0 340 164"><line x1="15" y1="9.5" x2="330" y2="9.5" stroke="#e3e3e3" stroke-width="1"/><line x1="15" y1="73.5" x2="330" y2="73.5" stroke="#e3e3e3" stroke-width="1"/><line x1="15" y1="136.5" x2="330" y2="136.5" stroke="#e3e3e3" stroke-width="1"/><line x1="18.5" y1="10" x2="18.5" y2="136" stroke="#d9d9d9" stroke-width="1" stroke-dasharray="8,3"/><line x1="36.5" y1="10" x2="36.5" y2="136" stroke="#d9d9d9" stroke-width="1" stroke-dasharray="8,3"/><line x1="40.5" y1="10" x2="40.5" y2="136" stroke="#d9d9d9" stroke-width="1" stroke-dasharray="8,3"/><line x1="45.5" y1="10" x2="45.5" y2="136" stroke="#d9d9d9" stroke-width="1" stroke-dasharray="8,3"/><line x1="66.5" y1="10" x2="66.5" y2="136" stroke="#d9d9d9" stroke-width="1" stroke-dasharray="8,3"/><line x1="69.5" y1="10" x2="69.5" y2="136" stroke="#d9d9d9" stroke-width="1" stroke-dasharray="8,3"/><line x1="72.5" y1="10" x2="72.5" y2="136" stroke="#d9d9d9" stroke-width="1" stroke-dasharray="8,3"/><line x1="85.5" y1="10" x2="85.5" y2="136" stroke="#d9d9d9" stroke-width="1" stroke-dasharray="8,3"/><line x1="88.5" y1="10" x2="88.5" y2="136" stroke="#d9d9d9" stroke-width="1" stroke-dasharray="8,3"/><line x1="148.5" y1="10" x2="148.5" y2="136" stroke="#d9d9d9" stroke-width="1" stroke-dasharray="8,3"/><line x1="171.5" y1="10" x2="171.5" y2="136" stroke="#d9d9d9" stroke-width="1" stroke-dasharray="8,3"/><line x1="173.5" y1="10" x2="173.5" y2="136" stroke="#d9d9d9" stroke-width="1" stroke-dasharray="8,3"/><line x1="194.5" y1="10" x2="194.5" y2="136" stroke="#d9d9d9" stroke-width="1" stroke-dasharray="8,3"/><line x1="200.5" y1="10" x2="200.5" y2="136" stroke="#d9d9d9" stroke-width="1" stroke-dasharray="8,3"/><line x1="224.5" y1="10" x2="224.5" y2="136" stroke="#d9d9d9" stroke-width="1" stroke-dasharray="8,3"/><line x1="227.5" y1="10" x2="227.5" y2="136" stroke="#d9d9d9" stroke-width="1" stroke-dasharray="8,3"/><line x1="243.5" y1="10" x2="243.5" y2="136" stroke="#d9d9d9" stroke-width="1" stroke-dasharray="8,3"/><line x1="303.5" y1="10" x2="303.5" y2="136" stroke="#d9d9d9" stroke-width="1" stroke-dasharray="8,3"/><line x1="305.5" y1="10" x2="305.5" y2="136" stroke="#d9d9d9" stroke-width="1" stroke-dasharray="8,3"/><polyline points="15.0,136.0 60.6,136.2 63.8,48.6 67.1,54.2 70.3,67.1 72.7,61.9 75.9,67.1 78.8,61.0 82.0,58.7 84.8,67.1 88.0,63.5 92.8,67.1 96.0,71.9 99.2,75.9 102.5,76.7 105.7,69.5 108.9,71.9 112.1,71.1 115.3,72.7 117.7,67.1 120.6,55.8 123.8,66.3 126.6,69.5 129.3,73.2 132.2,67.1 135.4,63.5 138.6,71.1 141.9,63.9 146.7,62.3 150.7,56.1 154.7,58.2 158.7,60.3 162.4,61.9 165.7,60.3 171.4,85.6 174.7,63.1 177.9,59.0 180.8,46.2 183.5,44.9 186.2,43.8 189.4,45.8 192.7,39.7 195.6,44.9 198.5,27.7 201.2,44.6 204.4,36.5 207.6,45.8 210.8,35.2 213.3,35.7 216.5,41.0 219.7,44.6 222.6,49.7 225.3,51.3 228.5,49.1 231.3,54.2 234.5,61.5 237.4,59.0 240.3,62.6 243.5,62.3 246.2,55.0 249.4,56.6 252.7,79.9 255.4,99.3 258.0,98.9 260.7,104.1 263.9,107.6 267.1,111.3 270.4,103.8 273.1,79.9 276.0,72.7 279.2,100.9 282.1,135.4 330.0,135.5" fill="none" stroke="#f2c83c" stroke-width="2" stroke-linejoin="round"/><g transform="translate(27.1,136.9)"><circle r="8.7" fill="#fff"/><path d="M-6.8,3.8 L-5.9,10.2 L0.8,6.8 z" fill="#fff" stroke="#fff" stroke-width="1.4"/><circle r="7.8" fill="#c80915"/><path d="M-6,3.8 L-5.8,9.6 L0.4,6.9 z" fill="#c80915"/></g><g transform="translate(19.4,136.9)"><circle r="8.7" fill="#fff"/><path d="M-6.8,3.8 L-5.9,10.2 L0.8,6.8 z" fill="#fff" stroke="#fff" stroke-width="1.4"/><circle r="7.8" fill="#c80915"/><path d="M-6,3.8 L-5.8,9.6 L0.4,6.9 z" fill="#c80915"/></g><g transform="translate(11.7,136.9)"><circle r="8.7" fill="#fff"/><path d="M-6.8,3.8 L-5.9,10.2 L0.8,6.8 z" fill="#fff" stroke="#fff" stroke-width="1.4"/><circle r="7.8" fill="#c80915"/><path d="M-6,3.8 L-5.8,9.6 L0.4,6.9 z" fill="#c80915"/><path d="M-2.1,-3 v6.4 M2.1,-3 v6.4 M-2.1,0.3 h4.2" stroke="#fff" stroke-width="1.45" fill="none"/></g><g transform="translate(48.6,136.9)"><circle r="8.7" fill="#fff"/><path d="M-6.8,3.8 L-5.9,10.2 L0.8,6.8 z" fill="#fff" stroke="#fff" stroke-width="1.4"/><circle r="7.8" fill="#c80915"/><path d="M-6,3.8 L-5.8,9.6 L0.4,6.9 z" fill="#c80915"/></g><g transform="translate(34.8,136.9)"><circle r="8.7" fill="#fff"/><path d="M-6.8,3.8 L-5.9,10.2 L0.8,6.8 z" fill="#fff" stroke="#fff" stroke-width="1.4"/><circle r="7.8" fill="#c80915"/><path d="M-6,3.8 L-5.8,9.6 L0.4,6.9 z" fill="#c80915"/><path d="M-2.1,-3 v6.4" stroke="#fff" stroke-width="1.45" fill="none"/></g><g transform="translate(42.6,136.9)"><circle r="8.7" fill="#fff"/><path d="M-6.8,3.8 L-5.9,10.2 L0.8,6.8 z" fill="#fff" stroke="#fff" stroke-width="1.4"/><circle r="7.8" fill="#c80915"/><path d="M-6,3.8 L-5.8,9.6 L0.4,6.9 z" fill="#c80915"/><path d="M-2.1,-3 v6.4 M2.1,-3 v6.4 M-2.1,0.3 h4.2" stroke="#fff" stroke-width="1.45" fill="none"/></g><g transform="translate(80.0,136.9)"><circle r="8.7" fill="#fff"/><path d="M-6.8,3.8 L-5.9,10.2 L0.8,6.8 z" fill="#fff" stroke="#fff" stroke-width="1.4"/><circle r="7.8" fill="#c80915"/><path d="M-6,3.8 L-5.8,9.6 L0.4,6.9 z" fill="#c80915"/></g><g transform="translate(64.8,136.9)"><circle r="8.7" fill="#fff"/><path d="M-6.8,3.8 L-5.9,10.2 L0.8,6.8 z" fill="#fff" stroke="#fff" stroke-width="1.4"/><circle r="7.8" fill="#c80915"/><path d="M-6,3.8 L-5.8,9.6 L0.4,6.9 z" fill="#c80915"/><path d="M-2.1,-3 v6.4" stroke="#fff" stroke-width="1.45" fill="none"/></g><g transform="translate(72.5,136.9)"><circle r="8.7" fill="#fff"/><path d="M-6.8,3.8 L-5.9,10.2 L0.8,6.8 z" fill="#fff" stroke="#fff" stroke-width="1.4"/><circle r="7.8" fill="#c80915"/><path d="M-6,3.8 L-5.8,9.6 L0.4,6.9 z" fill="#c80915"/><path d="M-2.1,-3 v6.4 M2.1,-3 v6.4 M-2.1,0.3 h4.2" stroke="#fff" stroke-width="1.45" fill="none"/></g><g transform="translate(87.5,136.9)"><circle r="8.7" fill="#fff"/><path d="M-6.8,3.8 L-5.9,10.2 L0.8,6.8 z" fill="#fff" stroke="#fff" stroke-width="1.4"/><circle r="7.8" fill="#c80915"/><path d="M-6,3.8 L-5.8,9.6 L0.4,6.9 z" fill="#c80915"/><path d="M-2.1,-3 v6.4 M2.1,-3 v6.4 M-2.1,0.3 h4.2" stroke="#fff" stroke-width="1.45" fill="none"/></g><g transform="translate(148.0,136.9)"><circle r="8.7" fill="#fff"/><path d="M-6.8,3.8 L-5.9,10.2 L0.8,6.8 z" fill="#fff" stroke="#fff" stroke-width="1.4"/><circle r="7.8" fill="#c80915"/><path d="M-6,3.8 L-5.8,9.6 L0.4,6.9 z" fill="#c80915"/><path d="M-2.1,-3 v6.4 M2.1,-3 v6.4 M-2.1,0.3 h4.2" stroke="#fff" stroke-width="1.45" fill="none"/></g><g transform="translate(183.0,136.9)"><circle r="8.7" fill="#fff"/><path d="M-6.8,3.8 L-5.9,10.2 L0.8,6.8 z" fill="#fff" stroke="#fff" stroke-width="1.4"/><circle r="7.8" fill="#c80915"/><path d="M-6,3.8 L-5.8,9.6 L0.4,6.9 z" fill="#c80915"/></g><g transform="translate(175.8,136.9)"><circle r="8.7" fill="#fff"/><path d="M-6.8,3.8 L-5.9,10.2 L0.8,6.8 z" fill="#fff" stroke="#fff" stroke-width="1.4"/><circle r="7.8" fill="#c80915"/><path d="M-6,3.8 L-5.8,9.6 L0.4,6.9 z" fill="#c80915"/></g><g transform="translate(167.5,136.9)"><circle r="8.7" fill="#fff"/><path d="M-6.8,3.8 L-5.9,10.2 L0.8,6.8 z" fill="#fff" stroke="#fff" stroke-width="1.4"/><circle r="7.8" fill="#c80915"/><path d="M-6,3.8 L-5.8,9.6 L0.4,6.9 z" fill="#c80915"/><path d="M-2.1,-3 v6.4 M2.1,-3 v6.4 M-2.1,0.3 h4.2" stroke="#fff" stroke-width="1.45" fill="none"/></g><g transform="translate(191.7,136.9)"><circle r="8.7" fill="#fff"/><path d="M-6.8,3.8 L-5.9,10.2 L0.8,6.8 z" fill="#fff" stroke="#fff" stroke-width="1.4"/><circle r="7.8" fill="#c80915"/><path d="M-6,3.8 L-5.8,9.6 L0.4,6.9 z" fill="#c80915"/><path d="M-2.1,-3 v6.4 M2.1,-3 v6.4 M-2.1,0.3 h4.2" stroke="#fff" stroke-width="1.45" fill="none"/></g><g transform="translate(201.0,136.9)"><circle r="8.7" fill="#fff"/><path d="M-6.8,3.8 L-5.9,10.2 L0.8,6.8 z" fill="#fff" stroke="#fff" stroke-width="1.4"/><circle r="7.8" fill="#c80915"/><path d="M-6,3.8 L-5.8,9.6 L0.4,6.9 z" fill="#c80915"/><path d="M-2.1,-3 v6.4 M2.1,-3 v6.4 M-2.1,0.3 h4.2" stroke="#fff" stroke-width="1.45" fill="none"/></g><g transform="translate(232.0,136.9)"><circle r="8.7" fill="#fff"/><path d="M-6.8,3.8 L-5.9,10.2 L0.8,6.8 z" fill="#fff" stroke="#fff" stroke-width="1.4"/><circle r="7.8" fill="#c80915"/><path d="M-6,3.8 L-5.8,9.6 L0.4,6.9 z" fill="#c80915"/></g><g transform="translate(224.6,136.9)"><circle r="8.7" fill="#fff"/><path d="M-6.8,3.8 L-5.9,10.2 L0.8,6.8 z" fill="#fff" stroke="#fff" stroke-width="1.4"/><circle r="7.8" fill="#c80915"/><path d="M-6,3.8 L-5.8,9.6 L0.4,6.9 z" fill="#c80915"/><path d="M-2.1,-3 v6.4 M2.1,-3 v6.4 M-2.1,0.3 h4.2" stroke="#fff" stroke-width="1.45" fill="none"/></g><g transform="translate(243.1,136.9)"><circle r="8.7" fill="#fff"/><path d="M-6.8,3.8 L-5.9,10.2 L0.8,6.8 z" fill="#fff" stroke="#fff" stroke-width="1.4"/><circle r="7.8" fill="#c80915"/><path d="M-6,3.8 L-5.8,9.6 L0.4,6.9 z" fill="#c80915"/><path d="M-2.1,-3 v6.4 M2.1,-3 v6.4 M-2.1,0.3 h4.2" stroke="#fff" stroke-width="1.45" fill="none"/></g><g transform="translate(305.5,136.9)"><circle r="8.7" fill="#fff"/><path d="M-6.8,3.8 L-5.9,10.2 L0.8,6.8 z" fill="#fff" stroke="#fff" stroke-width="1.4"/><circle r="7.8" fill="#c80915"/><path d="M-6,3.8 L-5.8,9.6 L0.4,6.9 z" fill="#c80915"/><path d="M-2.1,-3 v6.4 M2.1,-3 v6.4 M-2.1,0.3 h4.2" stroke="#fff" stroke-width="1.45" fill="none"/></g><g transform="translate(330.0,136.9)"><circle r="8.7" fill="#fff"/><path d="M-6.8,3.8 L-5.9,10.2 L0.8,6.8 z" fill="#fff" stroke="#fff" stroke-width="1.4"/><circle r="7.8" fill="#c80915"/><path d="M-6,3.8 L-5.8,9.6 L0.4,6.9 z" fill="#c80915"/><path d="M-2.1,-3 v6.4 M2.1,-3 v6.4 M-2.1,0.3 h4.2" stroke="#fff" stroke-width="1.45" fill="none"/></g></svg>
<div class="t" style="left:435.30px;top:250.84px;font-size:12px;color:#222;font-weight:400;">2&thinsp;000</div>
<div class="t" style="left:435.30px;top:314.84px;font-size:12px;color:#222;font-weight:400;">1&thinsp;000</div>
<div class="t" style="left:435.00px;top:381.84px;font-size:12px;color:#a0a0a0;font-weight:400;letter-spacing:0.35px;">01.01 — 03.01</div>
<div class="t" style="right:418.40px;top:381.84px;font-size:12px;color:#a0a0a0;font-weight:400;letter-spacing:0.35px;">01.01 — 01.01</div>
<svg style="position:absolute;left:435.7px;top:416.8px;" width="9" height="9" viewBox="0 0 9 9"><circle cx="4.4" cy="4.2" r="4" fill="#f2c83c"/></svg>
<div class="t" style="left:450.30px;top:417.30px;font-size:13px;color:#222;font-weight:400;">Новые посетители</div>
<div class="t" style="right:418.20px;top:417.30px;font-size:13px;color:#222;font-weight:400;">82&thinsp;874</div>
<svg style="position:absolute;left:83.1px;top:576px;" width="240" height="240" viewBox="0 0 240 240"><circle cx="120" cy="120" r="110" fill="#fff"/><path d="M120.00,10.00 A110,110 0 1 1 17.31,80.58 L94.33,110.14 A27.5,27.5 0 1 0 120.00,92.50 Z" fill="#99cc66"/><path d="M17.24,80.76 A110,110 0 0 1 98.45,12.13 L114.61,93.03 A27.5,27.5 0 0 0 94.31,110.19 Z" fill="#ffd766"/><path d="M98.26,12.17 A110,110 0 0 1 109.07,10.54 L117.27,92.64 A27.5,27.5 0 0 0 114.56,93.04 Z" fill="#f4523b"/><path d="M108.88,10.56 A110,110 0 0 1 114.63,10.13 L118.66,92.53 A27.5,27.5 0 0 0 117.22,92.64 Z" fill="#8fb3e8"/><path d="M114.43,10.14 A110,110 0 0 1 118.27,10.01 L119.57,92.50 A27.5,27.5 0 0 0 118.61,92.54 Z" fill="#8a5cb5"/></svg>
<div class="t" style="left:46.00px;top:542.69px;font-size:11px;color:#999;font-weight:400;">Визиты</div>
<svg style="position:absolute;left:0px;top:0px;pointer-events:none" width="1167" height="808" viewBox="0 0 1167 808"><line x1="565.3" y1="585.5" x2="747" y2="585.5" stroke="#8ccae2" stroke-width="1"/><polygon points="590.1,585.5 591.3,567.1 593.0,572.3 596.1,570.9 598.0,569.5 599.9,568.5 603.0,570.2 605.6,569.2 608.1,571.4 609.8,570.5 611.6,570.6 613.3,571.5 615.0,571.9 618.1,574.0 621.0,571.4 622.7,571.9 624.4,573.7 626.6,572.6 628.7,571.4 630.4,571.1 632.1,570.5 633.8,570.9 635.5,571.0 637.3,570.4 639.0,571.1 640.7,571.3 642.4,571.0 644.1,571.4 645.8,572.3 647.5,571.9 649.3,572.2 651.0,571.4 652.7,570.5 654.4,570.6 656.1,570.7 657.8,571.9 659.5,572.3 661.3,574.0 663.0,574.5 664.7,573.7 666.4,572.6 668.1,572.6 669.8,573.6 671.5,573.1 673.3,572.8 675.0,573.7 677.5,575.4 679.3,573.9 681.0,571.4 683.1,572.0 685.2,573.1 687.0,572.2 688.7,571.8 690.4,571.9 692.1,571.2 693.8,570.9 695.5,572.9 697.2,574.0 699.8,568.9 702.4,570.6 705.0,564.6 706.7,566.3 708.4,561.7 710.1,572.3 712.7,569.7 714.4,570.1 716.1,571.4 717.8,573.1 718.7,585.5" fill="#acd9ec" stroke="#5fb3d6" stroke-width="0.9" stroke-linejoin="round"/><line x1="565.3" y1="739.6" x2="747" y2="739.6" stroke="#8ccae2" stroke-width="1"/><polygon points="589.3,739.6 591.3,709.1 593.7,709.3 596.1,710.1 597.8,709.4 599.6,709.9 601.3,709.6 603.0,708.0 604.7,707.7 606.4,706.7 608.1,708.4 609.8,710.4 612.0,709.6 614.1,710.1 617.0,707.0 620.1,710.8 621.8,710.7 623.6,709.9 625.3,710.4 627.0,710.4 628.7,710.0 630.4,710.3 632.1,711.0 633.8,711.3 635.5,711.1 637.3,709.5 639.0,709.0 640.7,708.7 642.4,709.6 644.1,710.7 645.8,710.8 647.5,711.0 649.3,710.9 651.0,711.8 652.7,711.3 654.4,710.8 656.1,712.1 657.8,711.8 659.5,711.2 661.3,710.8 663.0,710.5 664.7,710.8 666.4,710.1 668.1,710.4 669.8,709.6 671.5,710.0 673.3,711.3 675.0,710.8 676.7,710.3 678.4,709.6 680.1,709.6 681.8,710.1 683.5,709.6 685.2,710.4 687.0,709.7 688.7,709.8 690.4,710.4 692.1,710.1 693.8,710.0 695.5,709.8 697.2,710.2 699.0,710.1 700.7,709.3 702.4,708.7 704.1,709.1 705.8,710.1 707.5,710.5 709.2,710.4 711.0,710.1 712.7,710.1 714.4,710.8 717.0,711.3 717.8,739.6 718.7,739.6 720.4,716.4 721.6,739.6 722.6,739.6 723.8,716.4 725.5,739.6" fill="#acd9ec" stroke="#5fb3d6" stroke-width="0.9" stroke-linejoin="round"/></svg>
<div class="t" style="left:435.50px;top:546.98px;font-size:22px;color:#111;font-weight:400;">12,1&thinsp;%</div>
<div class="t" style="left:435.80px;top:576.44px;font-size:12px;color:#c9414a;font-weight:400;">+12,1&thinsp;%</div>
<div class="t" style="left:436.50px;top:700.68px;font-size:22px;color:#111;font-weight:400;letter-spacing:1.2px;">1,28</div>
<div class="t" style="left:823.00px;top:247.20px;font-size:13px;color:#111;font-weight:700;letter-spacing:-0.33px;">Адрес страницы</div>
<div class="t" style="right:31.00px;top:247.60px;font-size:13px;color:#111;font-weight:700;letter-spacing:-0.3px;">Просмотры</div>
<svg style="position:absolute;left:1052px;top:251px;" width="8" height="8" viewBox="0 0 8 8"><path d="M0.2,0.2 L7.8,0.2 L4,7.6 z" fill="#111"/></svg>
<svg style="position:absolute;left:826.6px;top:282.8px;" width="9" height="16" viewBox="0 0 9 16"><path d="M1,2 h6.6 C7.6,5.2 4.9,6.4 4.7,7.6 C4.9,8.8 7.8,10.2 7.8,13.2 h-7 C0.8,10.2 3.7,8.8 3.9,7.6 C3.7,6.4 1,5.2 1,2 z" fill="#f4f9e4" stroke="#8ba65a" stroke-width="0.8"/><rect x="0.2" y="0.3" width="8.2" height="2.3" rx="1.1" fill="#5a7430"/><path d="M1.3,12.6 C1.8,10.6 3.6,9.6 4.3,9.3 C5,9.6 6.8,10.6 7.3,12.6 z" fill="#9fcd5a"/><rect x="0.2" y="12.4" width="8.2" height="2.6" rx="1.2" fill="#7aa040"/></svg>
<div class="t" style="left:845.50px;top:282.87px;font-size:13.5px;color:#2b4689;font-weight:400;">doktorshen.ru/volosi1/</div>
<div class="t" style="right:30.80px;top:283.04px;font-size:13.3px;color:#222;font-weight:400;letter-spacing:-0.35px;">15&thinsp;381</div>
<svg style="position:absolute;left:826.6px;top:319.47px;" width="9" height="16" viewBox="0 0 9 16"><path d="M1,2 h6.6 C7.6,5.2 4.9,6.4 4.7,7.6 C4.9,8.8 7.8,10.2 7.8,13.2 h-7 C0.8,10.2 3.7,8.8 3.9,7.6 C3.7,6.4 1,5.2 1,2 z" fill="#f4f9e4" stroke="#8ba65a" stroke-width="0.8"/><rect x="0.2" y="0.3" width="8.2" height="2.3" rx="1.1" fill="#5a7430"/><path d="M1.3,12.6 C1.8,10.6 3.6,9.6 4.3,9.3 C5,9.6 6.8,10.6 7.3,12.6 z" fill="#9fcd5a"/><rect x="0.2" y="12.4" width="8.2" height="2.6" rx="1.2" fill="#7aa040"/></svg>
<div class="t" style="left:845.50px;top:319.54px;font-size:13.5px;color:#2b4689;font-weight:400;">doktorshen.ru/givot2/</div>
<div class="t" style="right:30.80px;top:319.71px;font-size:13.3px;color:#222;font-weight:400;letter-spacing:-0.35px;">8&thinsp;348</div>
<svg style="position:absolute;left:826.6px;top:356.14000000000004px;" width="9" height="16" viewBox="0 0 9 16"><path d="M1,2 h6.6 C7.6,5.2 4.9,6.4 4.7,7.6 C4.9,8.8 7.8,10.2 7.8,13.2 h-7 C0.8,10.2 3.7,8.8 3.9,7.6 C3.7,6.4 1,5.2 1,2 z" fill="#f4f9e4" stroke="#8ba65a" stroke-width="0.8"/><rect x="0.2" y="0.3" width="8.2" height="2.3" rx="1.1" fill="#5a7430"/><path d="M1.3,12.6 C1.8,10.6 3.6,9.6 4.3,9.3 C5,9.6 6.8,10.6 7.3,12.6 z" fill="#9fcd5a"/><rect x="0.2" y="12.4" width="8.2" height="2.6" rx="1.2" fill="#7aa040"/></svg>
<div class="t" style="left:845.50px;top:356.21px;font-size:13.5px;color:#606283;font-weight:400;">doktorshen.ru/gipertoniy/</div>
<div class="t" style="right:30.80px;top:356.38px;font-size:13.3px;color:#222;font-weight:400;letter-spacing:-0.35px;">4&thinsp;297</div>
<svg style="position:absolute;left:826.6px;top:392.81px;" width="9" height="16" viewBox="0 0 9 16"><path d="M1,2 h6.6 C7.6,5.2 4.9,6.4 4.7,7.6 C4.9,8.8 7.8,10.2 7.8,13.2 h-7 C0.8,10.2 3.7,8.8 3.9,7.6 C3.7,6.4 1,5.2 1,2 z" fill="#f4f9e4" stroke="#8ba65a" stroke-width="0.8"/><rect x="0.2" y="0.3" width="8.2" height="2.3" rx="1.1" fill="#5a7430"/><path d="M1.3,12.6 C1.8,10.6 3.6,9.6 4.3,9.3 C5,9.6 6.8,10.6 7.3,12.6 z" fill="#9fcd5a"/><rect x="0.2" y="12.4" width="8.2" height="2.6" rx="1.2" fill="#7aa040"/></svg>
<div class="t" style="left:845.50px;top:392.88px;font-size:13.5px;color:#2b4689;font-weight:400;">doktorshen.ru/shipica/</div>
<div class="t" style="right:30.80px;top:393.05px;font-size:13.3px;color:#222;font-weight:400;letter-spacing:-0.35px;">3&thinsp;750</div>
<svg style="position:absolute;left:826.6px;top:429.48px;" width="9" height="16" viewBox="0 0 9 16"><path d="M1,2 h6.6 C7.6,5.2 4.9,6.4 4.7,7.6 C4.9,8.8 7.8,10.2 7.8,13.2 h-7 C0.8,10.2 3.7,8.8 3.9,7.6 C3.7,6.4 1,5.2 1,2 z" fill="#f4f9e4" stroke="#8ba65a" stroke-width="0.8"/><rect x="0.2" y="0.3" width="8.2" height="2.3" rx="1.1" fill="#5a7430"/><path d="M1.3,12.6 C1.8,10.6 3.6,9.6 4.3,9.3 C5,9.6 6.8,10.6 7.3,12.6 z" fill="#9fcd5a"/><rect x="0.2" y="12.4" width="8.2" height="2.6" rx="1.2" fill="#7aa040"/></svg>
<div class="t" style="left:845.50px;top:429.55px;font-size:13.5px;color:#606283;font-weight:400;">doktorshen.ru/</div>
<div class="t" style="right:30.80px;top:429.72px;font-size:13.3px;color:#222;font-weight:400;letter-spacing:-0.35px;">3&thinsp;510</div>
<svg style="position:absolute;left:826.6px;top:466.15000000000003px;" width="9" height="16" viewBox="0 0 9 16"><path d="M1,2 h6.6 C7.6,5.2 4.9,6.4 4.7,7.6 C4.9,8.8 7.8,10.2 7.8,13.2 h-7 C0.8,10.2 3.7,8.8 3.9,7.6 C3.7,6.4 1,5.2 1,2 z" fill="#f4f9e4" stroke="#8ba65a" stroke-width="0.8"/><rect x="0.2" y="0.3" width="8.2" height="2.3" rx="1.1" fill="#5a7430"/><path d="M1.3,12.6 C1.8,10.6 3.6,9.6 4.3,9.3 C5,9.6 6.8,10.6 7.3,12.6 z" fill="#9fcd5a"/><rect x="0.2" y="12.4" width="8.2" height="2.6" rx="1.2" fill="#7aa040"/></svg>
<div class="t" style="left:845.50px;top:466.22px;font-size:13.5px;color:#2b4689;font-weight:400;">doktorshen.ru/givot3/</div>
<div class="t" style="right:30.80px;top:466.39px;font-size:13.3px;color:#222;font-weight:400;letter-spacing:-0.35px;">3&thinsp;110</div>
<svg style="position:absolute;left:826.6px;top:502.82px;" width="9" height="16" viewBox="0 0 9 16"><path d="M1,2 h6.6 C7.6,5.2 4.9,6.4 4.7,7.6 C4.9,8.8 7.8,10.2 7.8,13.2 h-7 C0.8,10.2 3.7,8.8 3.9,7.6 C3.7,6.4 1,5.2 1,2 z" fill="#f4f9e4" stroke="#8ba65a" stroke-width="0.8"/><rect x="0.2" y="0.3" width="8.2" height="2.3" rx="1.1" fill="#5a7430"/><path d="M1.3,12.6 C1.8,10.6 3.6,9.6 4.3,9.3 C5,9.6 6.8,10.6 7.3,12.6 z" fill="#9fcd5a"/><rect x="0.2" y="12.4" width="8.2" height="2.6" rx="1.2" fill="#7aa040"/></svg>
<div class="t" style="left:845.50px;top:502.89px;font-size:13.5px;color:#2b4689;font-weight:400;">doktorshen.ru/pot8-golova/</div>
<div class="t" style="right:30.80px;top:503.06px;font-size:13.3px;color:#222;font-weight:400;letter-spacing:-0.35px;">2&thinsp;941</div>
<svg style="position:absolute;left:826.6px;top:539.49px;" width="9" height="16" viewBox="0 0 9 16"><path d="M1,2 h6.6 C7.6,5.2 4.9,6.4 4.7,7.6 C4.9,8.8 7.8,10.2 7.8,13.2 h-7 C0.8,10.2 3.7,8.8 3.9,7.6 C3.7,6.4 1,5.2 1,2 z" fill="#f4f9e4" stroke="#8ba65a" stroke-width="0.8"/><rect x="0.2" y="0.3" width="8.2" height="2.3" rx="1.1" fill="#5a7430"/><path d="M1.3,12.6 C1.8,10.6 3.6,9.6 4.3,9.3 C5,9.6 6.8,10.6 7.3,12.6 z" fill="#9fcd5a"/><rect x="0.2" y="12.4" width="8.2" height="2.6" rx="1.2" fill="#7aa040"/></svg>
<div class="t" style="left:845.50px;top:539.56px;font-size:13.5px;color:#2b4689;font-weight:400;">doktorshen.ru/kak-razognat-dvi…</div>
<div class="t" style="right:30.80px;top:539.73px;font-size:13.3px;color:#222;font-weight:400;letter-spacing:-0.35px;">2&thinsp;932</div>
<svg style="position:absolute;left:826.6px;top:576.16px;" width="9" height="16" viewBox="0 0 9 16"><path d="M1,2 h6.6 C7.6,5.2 4.9,6.4 4.7,7.6 C4.9,8.8 7.8,10.2 7.8,13.2 h-7 C0.8,10.2 3.7,8.8 3.9,7.6 C3.7,6.4 1,5.2 1,2 z" fill="#f4f9e4" stroke="#8ba65a" stroke-width="0.8"/><rect x="0.2" y="0.3" width="8.2" height="2.3" rx="1.1" fill="#5a7430"/><path d="M1.3,12.6 C1.8,10.6 3.6,9.6 4.3,9.3 C5,9.6 6.8,10.6 7.3,12.6 z" fill="#9fcd5a"/><rect x="0.2" y="12.4" width="8.2" height="2.6" rx="1.2" fill="#7aa040"/></svg>
<div class="t" style="left:845.50px;top:576.23px;font-size:13.5px;color:#2b4689;font-weight:400;">doktorshen.ru/sutinwomen1/</div>
<div class="t" style="right:30.80px;top:576.40px;font-size:13.3px;color:#222;font-weight:400;letter-spacing:-0.35px;">2&thinsp;569</div>
<svg style="position:absolute;left:826.6px;top:612.8299999999999px;" width="9" height="16" viewBox="0 0 9 16"><path d="M1,2 h6.6 C7.6,5.2 4.9,6.4 4.7,7.6 C4.9,8.8 7.8,10.2 7.8,13.2 h-7 C0.8,10.2 3.7,8.8 3.9,7.6 C3.7,6.4 1,5.2 1,2 z" fill="#f4f9e4" stroke="#8ba65a" stroke-width="0.8"/><rect x="0.2" y="0.3" width="8.2" height="2.3" rx="1.1" fill="#5a7430"/><path d="M1.3,12.6 C1.8,10.6 3.6,9.6 4.3,9.3 C5,9.6 6.8,10.6 7.3,12.6 z" fill="#9fcd5a"/><rect x="0.2" y="12.4" width="8.2" height="2.6" rx="1.2" fill="#7aa040"/></svg>
<div class="t" style="left:845.50px;top:612.90px;font-size:13.5px;color:#2b4689;font-weight:400;">doktorshen.ru/otzuv/</div>
<div class="t" style="right:30.80px;top:613.07px;font-size:13.3px;color:#222;font-weight:400;letter-spacing:-0.35px;">2&thinsp;386</div>
<div class="t" style="left:823.00px;top:764.80px;font-size:13px;color:#111;font-weight:700;letter-spacing:-0.35px;">Последняя поисковая фраза</div>
<div class="t" style="right:31.00px;top:765.70px;font-size:13px;color:#111;font-weight:700;letter-spacing:-0.35px;">Визиты</div>
<svg style="position:absolute;left:1078px;top:769px;" width="8" height="8" viewBox="0 0 8 8"><path d="M0.2,0.2 L7.8,0.2 L4,7.6 z" fill="#111"/></svg>
<svg style="position:absolute;left:823px;top:800px;" width="16" height="10" viewBox="0 0 16 10"><rect x="0.5" y="0.5" width="14" height="14" rx="2" fill="#fff" stroke="#ccc"/><text x="4" y="12" font-size="10" fill="#e03030" font-family="Liberation Sans">Я</text></svg>
<div class="t" style="left:847.00px;top:801.77px;font-size:13.5px;color:#263e84;font-weight:400;width:164px;overflow:hidden;">лечение варикоза народными ср</div>
<div class="t" style="right:31.00px;top:802.00px;font-size:13px;color:#222;font-weight:400;">260</div>
<div style="position:absolute;left:0px;top:807px;width:55px;height:1px;box-sizing:border-box;background:#ececec;"></div>
<div style="position:absolute;left:55px;top:807px;width:1112px;height:1px;box-sizing:border-box;background:#c9c9c9;"></div>
</body></html>
